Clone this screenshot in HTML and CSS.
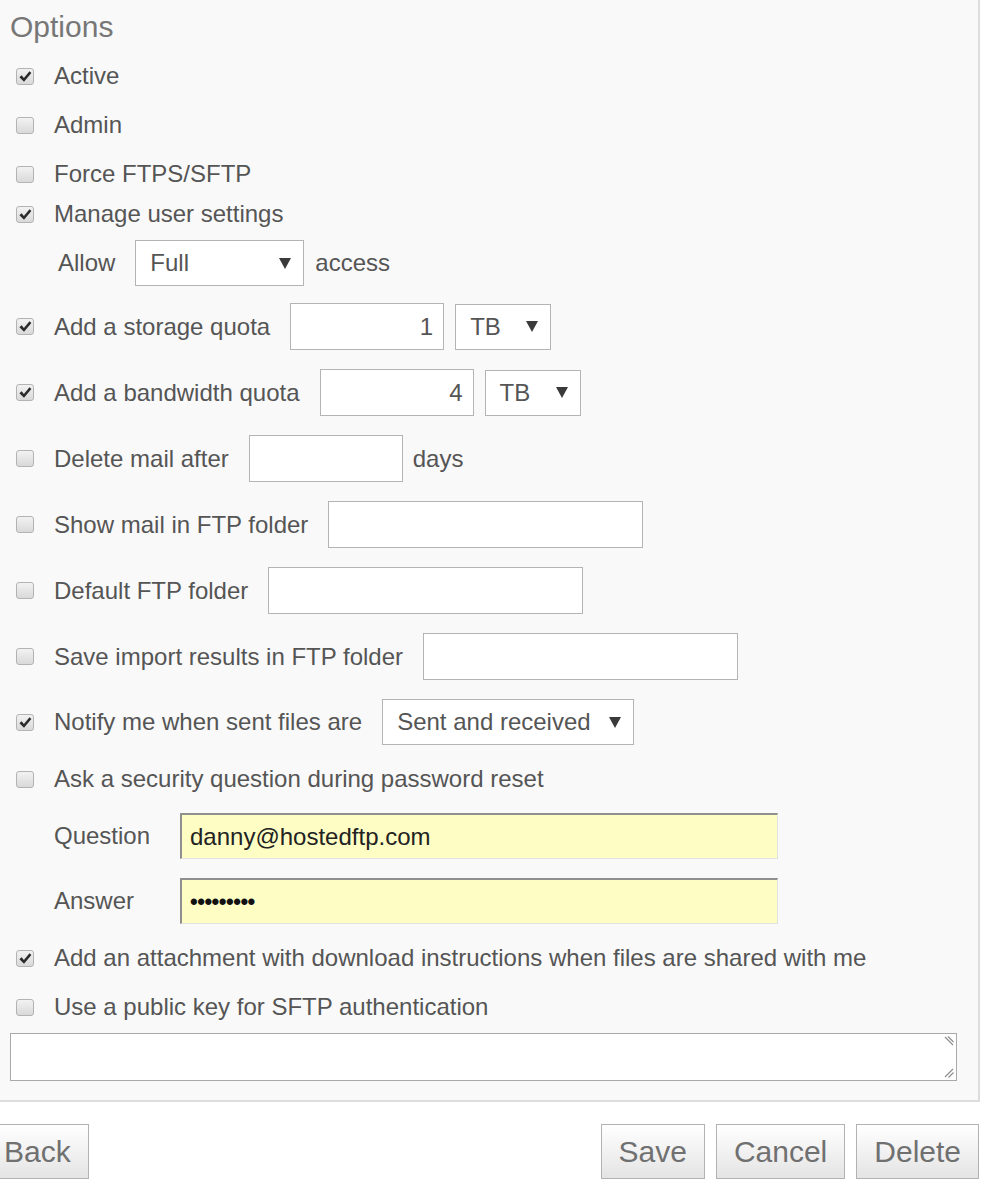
FILE: index.html
```html
<!DOCTYPE html>
<html lang="en">
<head>
<meta charset="utf-8">
<title>Options</title>
<link rel="stylesheet" href="styles.css">
</head>
<body>
<div class="panel">
  <h2 class="heading">Options</h2>
  <div class="options">
    <div class="row">
      <span class="cb on"><svg viewBox="0 0 18 17" width="18" height="17"><path d="M3.4 9.2 L5.6 7.2 L7.9 10.1 L13.5 3.2 L15.4 4.9 L8 13.8 Z" fill="#2b2b2b"/></svg></span>
      <span class="label">Active</span>
    </div>
    <div class="row">
      <span class="cb"></span>
      <span class="label">Admin</span>
    </div>
    <div class="row">
      <span class="cb"></span>
      <span class="label">Force FTPS/SFTP</span>
    </div>
    <div class="row close">
      <span class="cb on"><svg viewBox="0 0 18 17" width="18" height="17"><path d="M3.4 9.2 L5.6 7.2 L7.9 10.1 L13.5 3.2 L15.4 4.9 L8 13.8 Z" fill="#2b2b2b"/></svg></span>
      <span class="label">Manage user settings</span>
    </div>
    <div class="row sub allow">
      <span class="label">Allow</span>
      <div class="select w-allow"><span>Full</span><svg class="caret" viewBox="0 0 12 11" width="12" height="11"><path d="M0 0 H12 L6 11 Z" fill="#3a3a3a"/></svg></div>
      <span class="after">access</span>
    </div>
    <div class="row storage">
      <span class="cb on"><svg viewBox="0 0 18 17" width="18" height="17"><path d="M3.4 9.2 L5.6 7.2 L7.9 10.1 L13.5 3.2 L15.4 4.9 L8 13.8 Z" fill="#2b2b2b"/></svg></span>
      <span class="label">Add a storage quota</span>
      <div class="field num w-quota">1</div>
      <div class="select unit w-unit"><span>TB</span><svg class="caret" viewBox="0 0 12 11" width="12" height="11"><path d="M0 0 H12 L6 11 Z" fill="#3a3a3a"/></svg></div>
    </div>
    <div class="row">
      <span class="cb on"><svg viewBox="0 0 18 17" width="18" height="17"><path d="M3.4 9.2 L5.6 7.2 L7.9 10.1 L13.5 3.2 L15.4 4.9 L8 13.8 Z" fill="#2b2b2b"/></svg></span>
      <span class="label">Add a bandwidth quota</span>
      <div class="field num w-quota">4</div>
      <div class="select unit w-unit"><span>TB</span><svg class="caret" viewBox="0 0 12 11" width="12" height="11"><path d="M0 0 H12 L6 11 Z" fill="#3a3a3a"/></svg></div>
    </div>
    <div class="row">
      <span class="cb"></span>
      <span class="label">Delete mail after</span>
      <div class="field w-quota"></div>
      <span class="after">days</span>
    </div>
    <div class="row">
      <span class="cb"></span>
      <span class="label">Show mail in FTP folder</span>
      <div class="field w-folder"></div>
    </div>
    <div class="row">
      <span class="cb"></span>
      <span class="label">Default FTP folder</span>
      <div class="field w-folder"></div>
    </div>
    <div class="row">
      <span class="cb"></span>
      <span class="label">Save import results in FTP folder</span>
      <div class="field w-folder"></div>
    </div>
    <div class="row">
      <span class="cb on"><svg viewBox="0 0 18 17" width="18" height="17"><path d="M3.4 9.2 L5.6 7.2 L7.9 10.1 L13.5 3.2 L15.4 4.9 L8 13.8 Z" fill="#2b2b2b"/></svg></span>
      <span class="label">Notify me when sent files are</span>
      <div class="select w-notify"><span>Sent and received</span><svg class="caret" viewBox="0 0 12 11" width="12" height="11"><path d="M0 0 H12 L6 11 Z" fill="#3a3a3a"/></svg></div>
    </div>
    <div class="row">
      <span class="cb"></span>
      <span class="label">Ask a security question during password reset</span>
    </div>
    <div class="row qa">
      <span class="qa-label">Question</span>
      <div class="field yellow">danny@hostedftp.com</div>
    </div>
    <div class="row qa">
      <span class="qa-label">Answer</span>
      <div class="field yellow dots">&#8226;&#8226;&#8226;&#8226;&#8226;&#8226;&#8226;&#8226;&#8226;</div>
    </div>
    <div class="row">
      <span class="cb on"><svg viewBox="0 0 18 17" width="18" height="17"><path d="M3.4 9.2 L5.6 7.2 L7.9 10.1 L13.5 3.2 L15.4 4.9 L8 13.8 Z" fill="#2b2b2b"/></svg></span>
      <span class="label">Add an attachment with download instructions when files are shared with me</span>
    </div>
    <div class="row">
      <span class="cb"></span>
      <span class="label">Use a public key for SFTP authentication</span>
    </div>
    <div class="textarea-wrap">
      <textarea class="textarea"></textarea>
      <svg class="grip-top" viewBox="0 0 10 10" width="10" height="10"><path d="M1 1 L9 9 M4 0.5 L9.5 6" stroke="#8c8c8c" stroke-width="1.1" fill="none"/></svg>
      <svg class="grip-bottom" viewBox="0 0 10 10" width="10" height="10"><path d="M9 1 L1 9 M9.5 4.5 L4.5 9.5" stroke="#8c8c8c" stroke-width="1.1" fill="none"/></svg>
    </div>
  </div>
</div>
<div class="actions">
  <button class="btn back">Back</button>
  <div class="right-actions">
    <button class="btn">Save</button>
    <button class="btn">Cancel</button>
    <button class="btn">Delete</button>
  </div>
</div>
</body>
</html>
```
FILE: styles.css
```css
html, body {
  margin: 0;
  padding: 0;
  background: #ffffff;
}

body {
  font-family: "Liberation Sans", Arial, sans-serif;
  font-size: 24px;
  color: #555555;
}

.panel {
  margin: -2px 12px 0 -2px;
  border: 2px solid #dddddd;
  background: #f9f9f9;
  padding: 10px 21px 19px 10px;
}

.heading {
  margin: 0;
  font-size: 30px;
  font-weight: normal;
  line-height: 34px;
  color: #777777;
}

.options {
  display: flex;
  flex-direction: column;
  gap: 19px;
  margin-top: 17px;
}

.row {
  display: flex;
  align-items: center;
  min-height: 30px;
  line-height: 30px;
}

.row.close { margin-top: -9px; }
.row.allow { margin-top: -8px; }
.row.storage { margin-top: -2px; }

.cb {
  box-sizing: border-box;
  width: 18px;
  height: 17px;
  margin-left: 6px;
  margin-right: 20px;
  border: 1px solid #b3b3b3;
  border-radius: 3px;
  background: linear-gradient(#f2f2f2, #d9d9d9);
  display: flex;
  align-items: center;
  justify-content: center;
  flex: none;
}

.cb svg {
  display: block;
  margin: -1px;
}

.label {
  white-space: nowrap;
}

.sub {
  padding-left: 48px;
}

.field,
.select {
  box-sizing: border-box;
  height: 47px;
  border: 1px solid #b4b4b4;
  background: #ffffff;
  color: #555555;
  display: flex;
  align-items: center;
  margin-left: 20px;
  flex: none;
}

.field.num {
  justify-content: flex-end;
  padding-right: 10px;
}

.select {
  height: 46px;
  justify-content: space-between;
  padding: 0 12px 0 14px;
}

.select .caret {
  display: block;
}

.unit {
  margin-left: 11px;
}

.w-allow { width: 169px; }
.w-quota { width: 154px; }
.w-unit { width: 96px; }
.w-folder { width: 315px; }
.w-notify { width: 252px; }

.after {
  margin-left: 10px;
}

.allow .after {
  margin-left: 11px;
}

.qa {
  padding-left: 44px;
}

.qa-label {
  width: 126px;
  flex: none;
}

.field.yellow {
  margin-left: 0;
  width: 598px;
  height: 46px;
  background: #fdfdc4;
  border-top: 2px solid #8f8f8f;
  border-left: 2px solid #8f8f8f;
  border-right: 1px solid #e2e2e2;
  border-bottom: 1px solid #e2e2e2;
  padding-left: 8px;
  color: #222222;
}

.field.dots {
  font-size: 22px;
  font-weight: bold;
  letter-spacing: -0.5px;
  color: #111111;
}

.textarea-wrap {
  position: relative;
  margin-top: -8px;
  height: 48px;
}

.textarea {
  display: block;
  box-sizing: border-box;
  width: 100%;
  height: 48px;
  margin: 0;
  border: 1px solid #a9a9a9;
  background: #ffffff;
  resize: none;
  font-family: inherit;
}

.grip-top {
  position: absolute;
  right: 3px;
  top: 3px;
}

.grip-bottom {
  position: absolute;
  right: 3px;
  bottom: 3px;
}

.actions {
  display: flex;
  justify-content: space-between;
  margin-top: 22px;
  margin-right: 13px;
}

.right-actions {
  display: flex;
  gap: 11px;
}

.btn {
  box-sizing: border-box;
  height: 55px;
  margin: 0;
  padding: 0 17px;
  border: 1px solid #b2b2b2;
  border-radius: 0;
  background: linear-gradient(#ffffff, #e4e4e4);
  font-family: "Liberation Sans", Arial, sans-serif;
  font-size: 30px;
  line-height: 34px;
  color: #707070;
}

.btn.back {
  margin-left: -14px;
}
```
